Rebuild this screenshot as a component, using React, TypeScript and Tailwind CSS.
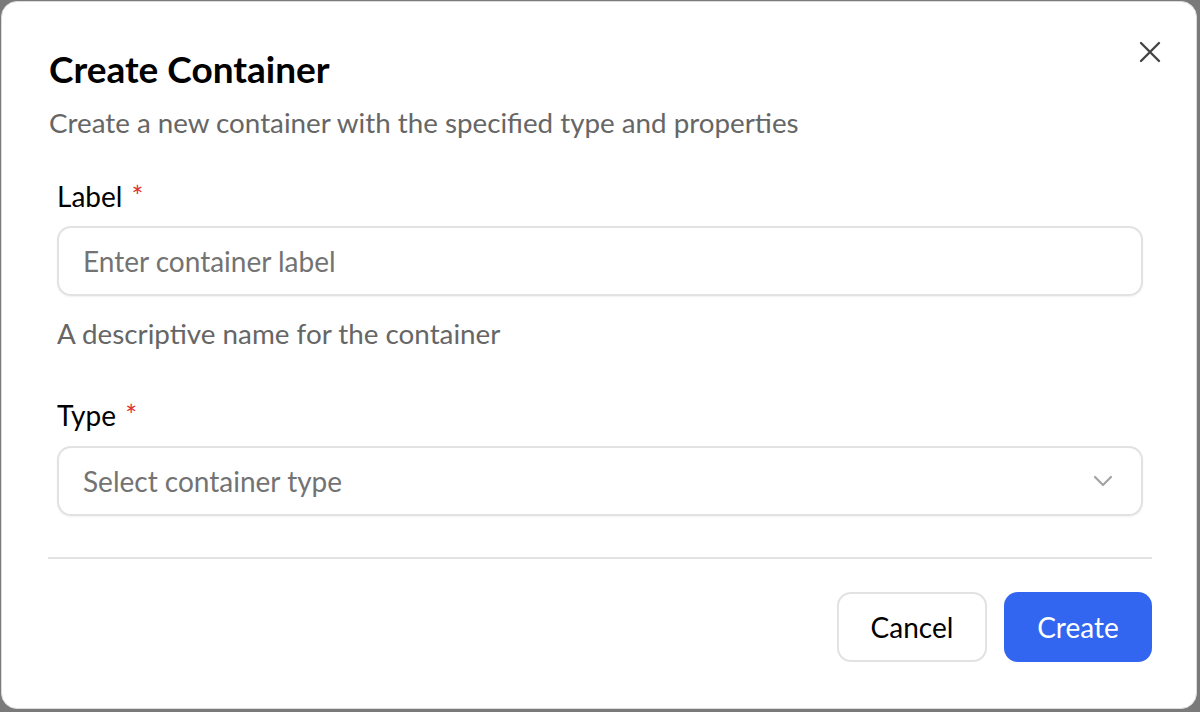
import React from "react";

export default function App() {
  return (
    <div
      className="w-[1200px] h-[712px] bg-[#7a7a7a] pl-[1px] pt-[1px] pr-[3px] pb-[3px]"
      style={{ fontFamily: "Lato, 'Noto Sans', sans-serif" }}
    >
      <div className="relative w-full h-full bg-white rounded-[16px] border border-[#dcdcdc] pl-[46px] pr-[44px] pt-[45px]">
        <button className="absolute right-[32px] top-[36px] w-[28px] h-[28px] flex items-center justify-center text-[#444]">
          <svg width="22" height="22" viewBox="0 0 22 22" fill="none" stroke="currentColor" strokeWidth="2.4" strokeLinecap="round">
            <path d="M2 2 L20 20 M20 2 L2 20" />
          </svg>
        </button>
        <h2 className="pl-[1px] text-[37px] leading-[44px] font-bold text-black">Create Container</h2>
        <p className="pl-[1px] mt-[15px] text-[27.75px] leading-[34px] text-[#666666]">
          Create a new container with the specified type and properties
        </p>
        <div className="px-[9px]">
          <div className="mt-[39px] text-[28px] leading-[34px] text-black">
            Label <span className="text-[#e03131] ml-[2px]">*</span>
          </div>
          <div className="mt-[13px] h-[70px] rounded-[14px] border-2 border-[#e2e2e2] shadow-[0_1px_2px_rgba(0,0,0,0.06)] flex items-center px-[24px] text-[28px] text-[#737373]">
            Enter container label
          </div>
          <div className="mt-[21px] text-[27.8px] leading-[34px] text-[#666666]">A descriptive name for the container</div>
          <div className="mt-[47px] text-[28px] leading-[34px] text-black">
            Type <span className="text-[#e03131] ml-[2px]">*</span>
          </div>
          <div className="mt-[14px] h-[70px] rounded-[14px] border-2 border-[#e2e2e2] shadow-[0_1px_2px_rgba(0,0,0,0.06)] flex items-center justify-between pl-[24px] pr-[28px] text-[28px] text-[#737373]">
            <span>Select container type</span>
            <svg width="20" height="12" viewBox="0 0 20 12" fill="none" stroke="#a3a3a3" strokeWidth="2.2" strokeLinecap="round" strokeLinejoin="round">
              <path d="M2 2 L10 10 L18 2" />
            </svg>
          </div>
        </div>
        <div className="mt-[41px] h-[2px] bg-[#e2e2e2]" />
        <div className="mt-[33px] flex justify-end gap-[17px]">
          <button className="h-[70px] w-[150px] rounded-[14px] border-2 border-[#e2e2e2] bg-white text-[28px] text-black">
            Cancel
          </button>
          <button className="h-[70px] w-[148px] rounded-[14px] bg-[#3366f0] text-[28px] text-white">
            Create
          </button>
        </div>
      </div>
    </div>
  );
}
